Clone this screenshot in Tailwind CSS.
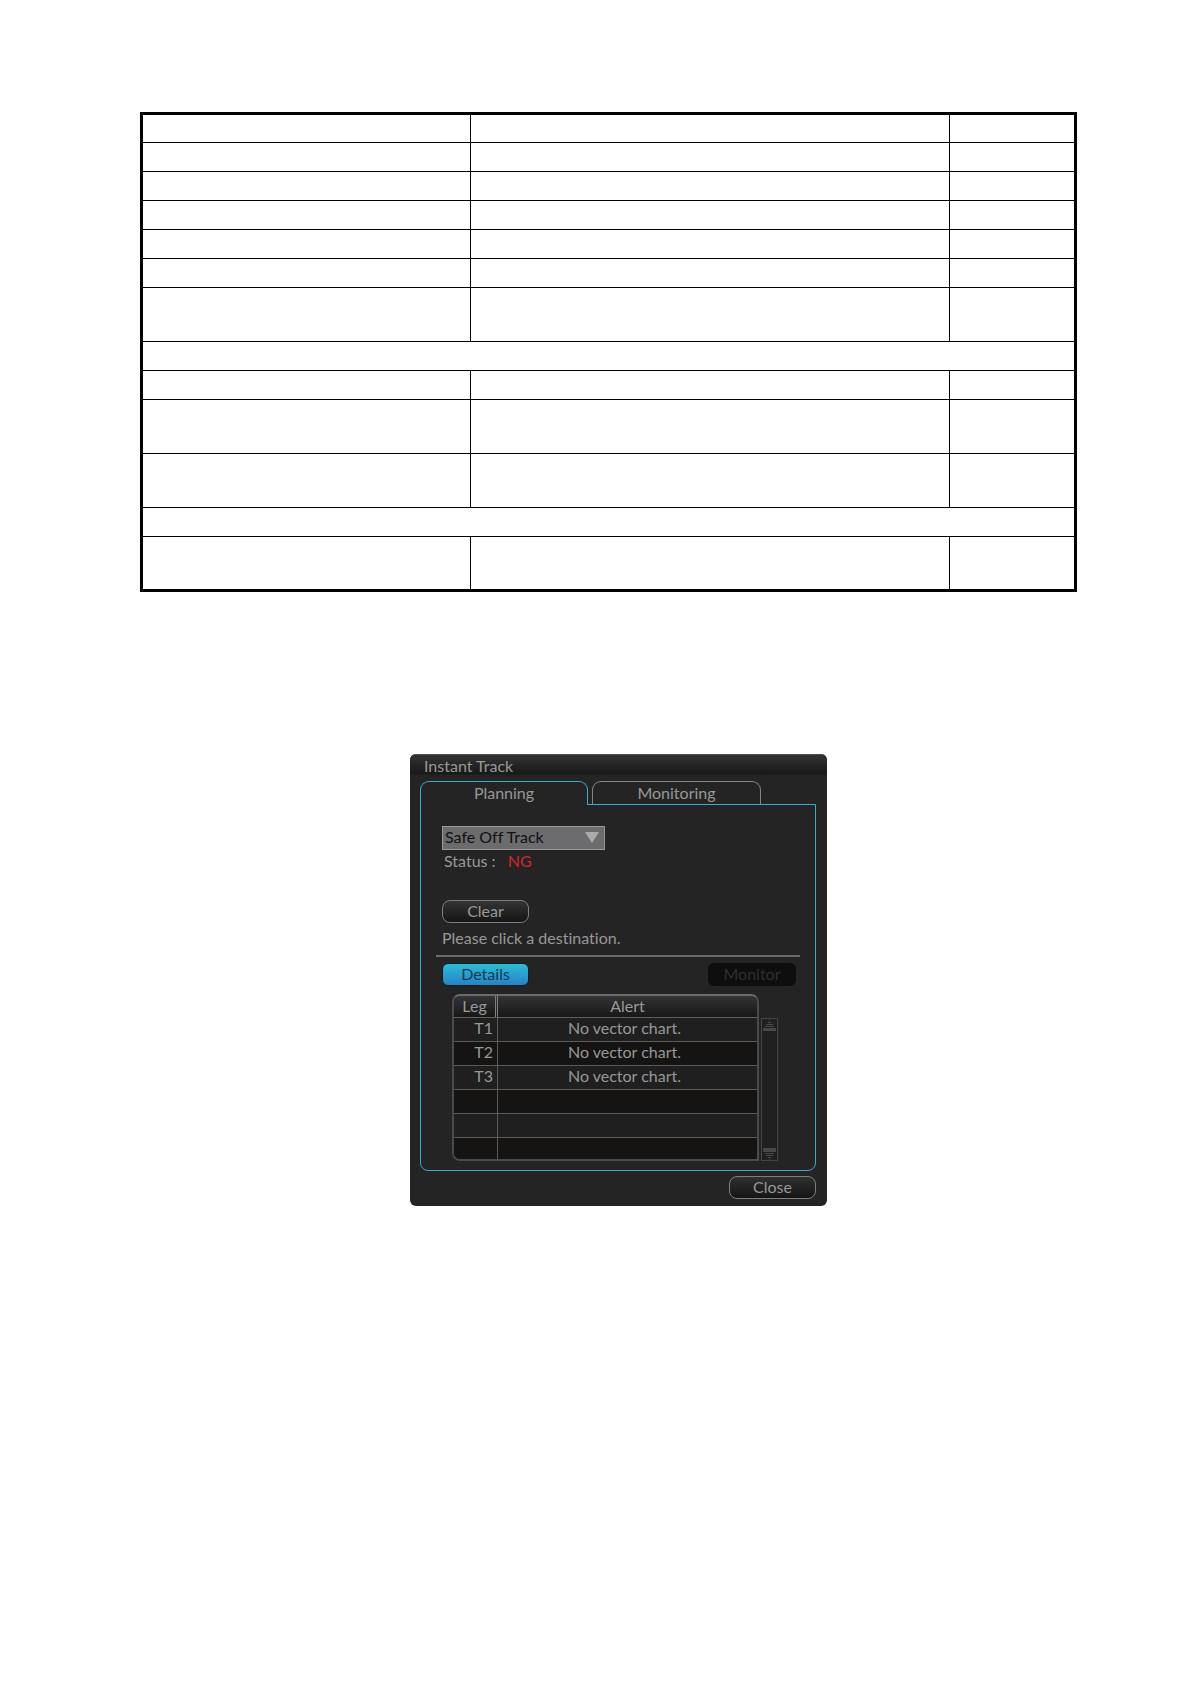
<!DOCTYPE html>
<html lang="en">
<head>
<meta charset="utf-8">
<title>Instant Track</title>
<script src="https://cdn.jsdelivr.net/npm/@tailwindcss/browser@4"></script>
</head>
<body class="min-h-screen bg-white">
<main class="pt-28 pl-[140px] pr-[113px]">
  <table class="w-full table-fixed border-separate border-spacing-0 border-3 border-black [&_td]:border-black [&_td]:p-0 [&_td]:border-b [&_tr:last-child_td]:border-b-0 [&_td:not(:last-child)]:border-r" aria-label="Parameters">
    <colgroup><col class="w-[328px]"><col><col class="w-[124px]"></colgroup>
    <tbody>
      <tr class="h-7"><td></td><td></td><td></td></tr>
      <tr class="h-[29px]"><td></td><td></td><td></td></tr>
      <tr class="h-[29px]"><td></td><td></td><td></td></tr>
      <tr class="h-[29px]"><td></td><td></td><td></td></tr>
      <tr class="h-[29px]"><td></td><td></td><td></td></tr>
      <tr class="h-[29px]"><td></td><td></td><td></td></tr>
      <tr class="h-[54px]"><td></td><td></td><td></td></tr>
      <tr class="h-[29px]"><td colspan="3"></td></tr>
      <tr class="h-[29px]"><td></td><td></td><td></td></tr>
      <tr class="h-[54px]"><td></td><td></td><td></td></tr>
      <tr class="h-[54px]"><td></td><td></td><td></td></tr>
      <tr class="h-[29px]"><td colspan="3"></td></tr>
      <tr class="h-[52px]"><td></td><td></td><td></td></tr>
    </tbody>
  </table>

  <section class="mt-[162px] ml-[270px] w-[417px] overflow-hidden rounded-md bg-[#242424] pb-[7px] font-['Lato',sans-serif] text-base leading-6 text-[#989898] [font-variant-ligatures:none]" aria-labelledby="dialog-title">
    <h1 id="dialog-title" class="h-6 border-t border-[#505050] bg-linear-to-b from-[#343434] via-[#191919] via-80% to-[#242424] to-90% pl-3.5 leading-[22px]">Instant Track</h1>

    <div class="mt-[3px] pr-[11px] pl-2.5">
      <div class="flex gap-1" role="tablist">
        <button type="button" role="tab" aria-selected="true" class="relative -mb-px h-6 w-[168px] rounded-t-[9px] border border-b-0 border-[#33b0c2] bg-[#242424] pb-0.5 leading-5">Planning</button>
        <button type="button" role="tab" aria-selected="false" class="h-[23px] w-[169px] rounded-t-[9px] border border-b-0 border-[#858585] pb-px leading-5">Monitoring</button>
      </div>

      <div role="tabpanel" class="rounded-b-lg border border-[#33b0c2] px-[15px] pt-[21px] pb-[9px]">
        <div class="px-1.5">
          <div class="relative w-[163px]">
            <select aria-label="Track type" class="block h-6 w-full appearance-none border border-[#999] bg-[#6c6b6d] pb-0.5 pl-0.5 leading-5 text-[#111]">
              <option>Safe Off Track</option>
            </select>
            <svg class="pointer-events-none absolute top-1.5 right-1.5" width="14" height="12" viewBox="0 0 14 12" aria-hidden="true"><path d="M0 0H14L7 11Z" fill="#aaa"/></svg>
          </div>
          <p class="pl-0.5 leading-[22px]">Status : <span class="ml-2 text-[#d8232a]">NG</span></p>
          <button type="button" class="mt-7 block h-[23px] w-[87px] rounded-lg border border-[#7d7d7d] bg-linear-to-b from-[#343434] to-[#151515] pb-0.5 leading-[19px]">Clear</button>
          <p class="mt-1 mb-[7px] pt-px leading-5">Please click a destination.</p>
        </div>

        <div class="flex justify-between border-t-2 border-[#6b6b6b] pt-1.5 pr-1 pl-1.5">
          <button type="button" class="h-[23px] w-[87px] rounded-md border border-[#101c20] bg-linear-to-b from-[#2cbdd6] to-[#2782c8] pb-0.5 leading-[19px] text-[#173a4d]">Details</button>
          <button type="button" disabled class="h-[23px] w-[88px] rounded-md bg-[#0e0e0e] pb-0.5 leading-[19px] text-[#2e2e2e]">Monitor</button>
        </div>

        <div class="mt-2 flex items-end gap-0.5 pl-4">
          <div class="w-[307px] overflow-hidden rounded-lg rounded-br-none border-2 border-[#4a4a4a] border-t-[#6a6a6a]">
            <table class="w-full table-fixed border-separate border-spacing-0 [&_td]:border-[#5a5a5a] [&_td]:p-0 [&_td]:pb-[3px] [&_td]:leading-5 [&_tr:not(:last-child)_td]:border-b [&_td:first-child]:border-r [&_td:first-child]:pr-1 [&_td:first-child]:text-right [&_td:last-child]:text-center [&_td:last-child]:pr-1.5">
              <colgroup><col class="w-[44px]"><col></colgroup>
              <thead class="bg-linear-to-b from-[#343434] to-[#161616]">
                <tr class="h-[22px]">
                  <th scope="col" class="border-r-3 border-b border-r-[#808080] border-b-[#606060] p-0 pb-px leading-5 font-normal [border-right-style:double]">Leg</th>
                  <th scope="col" class="border-b border-[#606060] p-0 pb-px leading-5 font-normal">Alert</th>
                </tr>
              </thead>
              <tbody>
                <tr class="h-6 bg-[#1f1f1f]"><td>T1</td><td>No vector chart.</td></tr>
                <tr class="h-6 bg-[#151413]"><td>T2</td><td>No vector chart.</td></tr>
                <tr class="h-6 bg-[#1f1f1f]"><td>T3</td><td>No vector chart.</td></tr>
                <tr class="h-6 bg-[#151413]"><td></td><td></td></tr>
                <tr class="h-6 bg-[#1f1f1f]"><td></td><td></td></tr>
                <tr class="h-[21px] bg-[#151413]"><td></td><td></td></tr>
              </tbody>
            </table>
          </div>
          <div class="flex h-[143px] w-[17px] flex-col justify-between border border-[#444] bg-[#202020] px-px" aria-hidden="true">
            <svg width="13" height="13" viewBox="0 0 13 13"><path d="M6 1h1v1H6zM5 3h3v1H5zM3 5h7v1H3zM2 7h9v1H2zM0 9h13v3H0z" fill="#484848"/></svg>
            <svg width="13" height="13" viewBox="0 0 13 13"><path d="M0 1h13v4H0zM2 6h9v1H2zM3 8h7v1H3zM5 10h3v1H5zM6 12h1v1H6z" fill="#484848"/></svg>
          </div>
        </div>
      </div>

      <div class="mt-[5px] flex justify-end">
        <button type="button" class="h-[23px] w-[87px] rounded-lg border border-[#7d7d7d] bg-linear-to-b from-[#303030] to-[#151515] pb-0.5 leading-[19px]">Close</button>
      </div>
    </div>
  </section>
</main>
</body>
</html>
